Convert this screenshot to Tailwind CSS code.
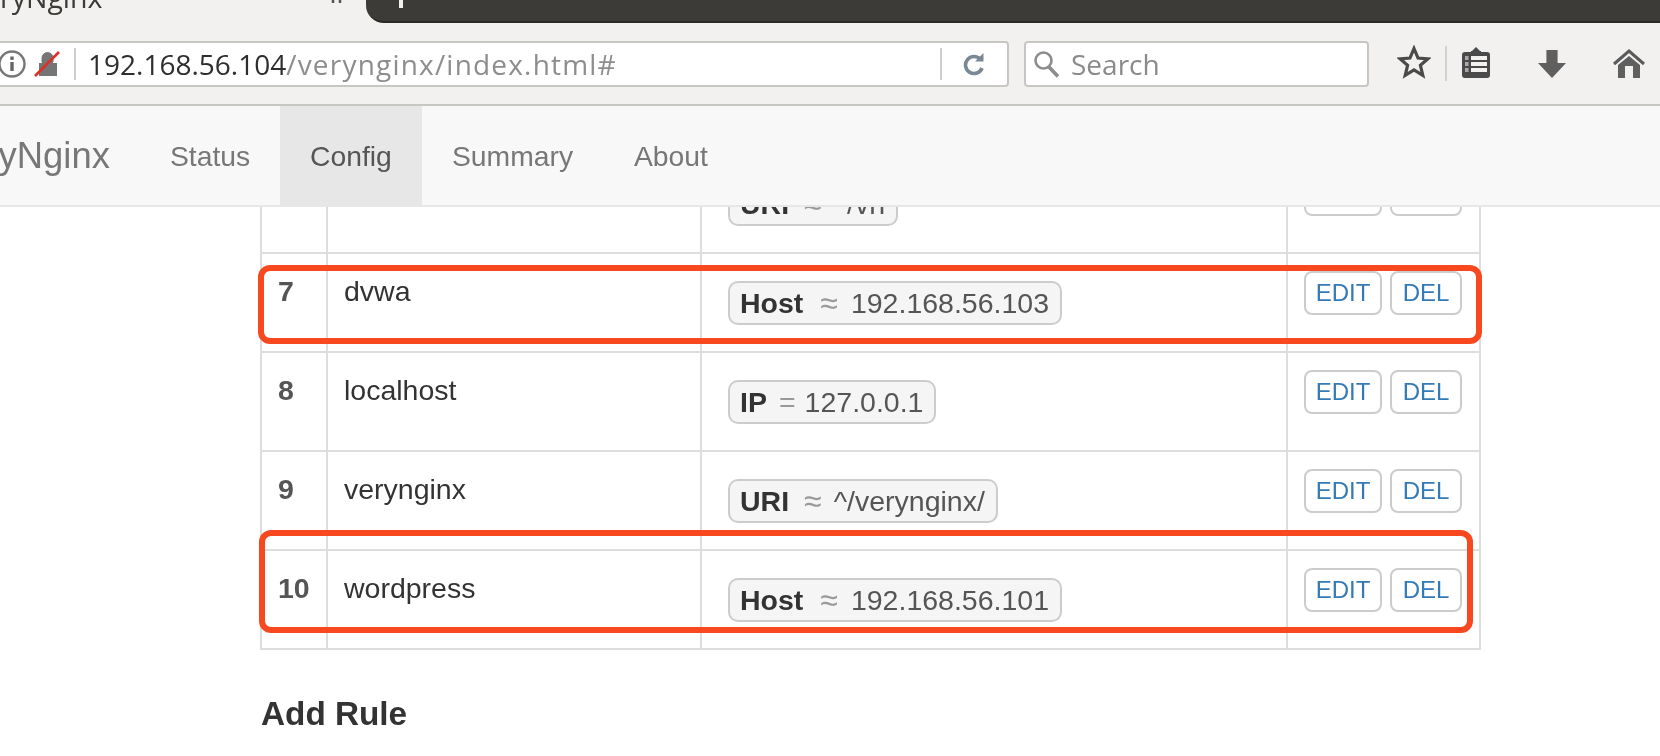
<!DOCTYPE html>
<html>
<head>
<meta charset="utf-8">
<title>VeryNginx</title>
<script src="https://cdn.jsdelivr.net/npm/@tailwindcss/browser@4"></script>
</head>
<body class="bg-white">
<div class="relative w-[1660px] h-[756px] overflow-hidden flex flex-col bg-white font-['Liberation_Sans',Arial,sans-serif] text-[#333] blur-[0.5px]">

  <!-- tab strip -->
  <div class="h-[23px] shrink-0 flex bg-[#f2f1f0] overflow-hidden">
    <div class="w-[337px] shrink-0 h-[30px] -mt-[14px] font-['Open_Sans',sans-serif] text-[28.5px] leading-[23px] text-[#3c3b37] whitespace-nowrap">ryNginx</div>
    <svg class="w-[12px] h-[4px] shrink-0 -ml-[6px]" viewBox="0 0 12 4"><path d="M2 0v3M9 0v3" stroke="#555" stroke-width="2.500" fill="none"/></svg>
    <div class="flex-1 ml-[23px] h-[23px] bg-[#3c3b37] rounded-bl-[18px] border-b-2 border-[#2b2a27] pl-[33px]">
      <div class="w-[4px] h-[8px] bg-[#f2f1f0]"></div>
    </div>
  </div>

  <!-- toolbar -->
  <div class="h-[83px] shrink-0 bg-[#f2f1f0] border-b-2 border-[#c8c6c2] flex items-start pt-[18px] font-['Open_Sans',sans-serif]">
    <div class="w-[1013px] -ml-[4px] h-[46px] shrink-0 bg-white border-2 border-[#c8c6c2] rounded-[4px] flex items-center">
      <svg class="-ml-[1px] shrink-0" width="30" height="30" viewBox="0 0 30 30"><circle cx="15" cy="15" r="12.500" fill="none" stroke="#777" stroke-width="2.400"/><rect x="13.300" y="13" width="3.400" height="9" fill="#666"/><rect x="13.300" y="7.500" width="3.400" height="3.400" fill="#666"/></svg>
      <svg class="ml-[6px] shrink-0" width="28" height="28" viewBox="0 0 28 28"><path d="M6 26V13h3V8a5.500 5.500 0 0 1 11 0v5h4v13z" fill="#757575"/><path d="M9 12V8a5.500 5.500 0 0 1 11 0v4" fill="none" stroke="#757575" stroke-width="1"/><path d="M2 26L26 2" stroke="#d8322a" stroke-width="2.600"/></svg>
      <div class="ml-[13px] w-[2px] h-[32px] bg-[#cfcdc9] shrink-0"></div>
      <div class="ml-[12px] text-[28px] leading-[40px] whitespace-nowrap text-[#2e2e2e] shrink-0">192.168.56.104<span class="text-[#8d8d8d] tracking-[1.2px]">/verynginx/index.html#</span></div>
      <div class="flex-1"></div>
      <div class="w-[2px] h-[32px] bg-[#cfcdc9] shrink-0"></div>
      <svg class="ml-[21px] mr-[22px] shrink-0" width="22" height="24" viewBox="0 0 22 24"><path d="M17.500 7.500A8.500 8.500 0 1 0 19 16" fill="none" stroke="#7a8794" stroke-width="3.600"/><path d="M12 9.500h8.500V1z" fill="#7a8794"/></svg>
    </div>
    <div class="ml-[15px] w-[345px] h-[46px] shrink-0 bg-white border-2 border-[#c8c6c2] rounded-[4px] flex items-center">
      <svg class="ml-[6px] shrink-0" width="28" height="28" viewBox="0 0 28 28"><circle cx="11.500" cy="10.500" r="8" fill="none" stroke="#8c8c8c" stroke-width="2.600"/><path d="M17 17l9 9.500" stroke="#8c8c8c" stroke-width="3.600"/></svg>
      <div class="ml-[11px] text-[28px] leading-[40px] text-[#8a8a8a]">Search</div>
    </div>
    <div class="flex items-start">
      <svg class="ml-[28px] mt-[4px] shrink-0" width="34" height="34" viewBox="0 0 34 34"><path d="M17 3.500l4 9.500 10 .8-7.600 6.600 2.400 10L17 25l-8.800 5.400 2.400-10L3 13.800l10-.8z" fill="none" stroke="#4a4a4a" stroke-width="3.200" stroke-linejoin="miter"/></svg>
      <div class="ml-[14px] mt-[5px] w-[2px] h-[35px] bg-[#d3d1cd] shrink-0"></div>
      <svg class="ml-[15px] mt-[6px] shrink-0" width="28" height="32" viewBox="0 0 28 32"><path d="M9 4h1l4-4 4 4h1v1h6q3 0 3 3v20q0 3-3 3H3q-3 0-3-3V8q0-3 3-3h6z" fill="#4a4a4a"/><path d="M3 9h3.500v4H3zM3 15h3.500v4H3zM3 21h3.500v4H3z" fill="#a9a9a9"/><path d="M9 9h16v4H9zM9 15h16v4H9zM9 21h16v4H9z" fill="#f2f1f0"/></svg>
      <svg class="ml-[48px] mt-[8px] shrink-0" width="28" height="30" viewBox="0 0 30 30"><path d="M9 0h12v14h9L15 30 0 14h9z" fill="#5f5f5f"/></svg>
      <svg class="ml-[47px] mt-[8px] shrink-0" width="32" height="30" viewBox="0 0 32 30"><path d="M1 15L16 2l15 13" fill="none" stroke="#5a5a5a" stroke-width="3"/><path d="M5 16L16 7l11 9v13h-7V17h-8v12H5z" fill="#5f5f5f"/></svg>
    </div>
  </div>

  <!-- navbar -->
  <nav class="relative z-10 h-[101px] shrink-0 bg-[#f8f8f8] border-b-2 border-[#e7e7e7] flex text-[28.3px] leading-[40px] text-[#777]">
    <div class="-ml-[56px] w-[196px] shrink-0 pt-[30px] text-[36.400px] whitespace-nowrap">VeryNginx</div>
    <a class="w-[140px] shrink-0 px-[30px] py-[30px]">Status</a>
    <a class="w-[142px] shrink-0 px-[30px] py-[30px] bg-[#e7e7e7] text-[#555]">Config</a>
    <a class="w-[182px] shrink-0 px-[30px] py-[30px]">Summary</a>
    <a class="shrink-0 px-[30px] py-[30px]">About</a>
  </nav>

  <!-- content -->
  <main class="flex-1 min-h-0 overflow-hidden pl-[260px] text-[28.500px] leading-[40px]">
    <table class="w-[1219px] -mt-[54px] table-fixed border-collapse">
      <colgroup>
        <col class="w-[66px]"><col class="w-[374px]"><col class="w-[586px]"><col class="w-[193px]">
      </colgroup>
      <tbody>
        <tr class="h-[99px]">
          <td class="border-2 border-[#ddd] p-4 align-top font-bold text-[#555]"></td>
          <td class="border-2 border-[#ddd] p-4 align-top"></td>
          <td class="border-2 border-[#ddd] pt-[27px] pl-[26px] align-top">
            <div class="inline-flex items-center h-[44px] border-2 border-[#ccc] rounded-[10px] bg-[#f5f5f5] pl-[10px] pr-[11px]"><b>URI</b><span class="ml-[15px] text-[32px] text-[#999]">≈</span><span class="ml-[12px] text-[#555]">^/vn</span></div>
          </td>
          <td class="border-2 border-[#ddd] pt-[17px] pl-[16px] align-top">
            <div class="flex gap-[8px]">
              <button class="w-[78px] h-[44px] border-2 border-[#ccc] rounded-[8px] bg-white text-[24px] text-[#337ab7]">EDIT</button>
              <button class="w-[72px] h-[44px] border-2 border-[#ccc] rounded-[8px] bg-white text-[24px] text-[#337ab7]">DEL</button>
            </div>
          </td>
        </tr>
        <tr class="h-[99px]">
          <td class="border-2 border-[#ddd] pt-[17px] pl-[16px] align-top font-bold text-[#555]">7</td>
          <td class="border-2 border-[#ddd] pt-[17px] pl-[16px] align-top">dvwa</td>
          <td class="border-2 border-[#ddd] pt-[27px] pl-[26px] align-top">
            <div class="inline-flex items-center h-[44px] border-2 border-[#ccc] rounded-[10px] bg-[#f5f5f5] pl-[10px] pr-[11px]"><b>Host</b><span class="ml-[17px] text-[32px] text-[#999]">≈</span><span class="ml-[13px] text-[#555]">192.168.56.103</span></div>
          </td>
          <td class="border-2 border-[#ddd] pt-[17px] pl-[16px] align-top">
            <div class="flex gap-[8px]">
              <button class="w-[78px] h-[44px] border-2 border-[#ccc] rounded-[8px] bg-white text-[24px] text-[#337ab7]">EDIT</button>
              <button class="w-[72px] h-[44px] border-2 border-[#ccc] rounded-[8px] bg-white text-[24px] text-[#337ab7]">DEL</button>
            </div>
          </td>
        </tr>
        <tr class="h-[99px]">
          <td class="border-2 border-[#ddd] pt-[17px] pl-[16px] align-top font-bold text-[#555]">8</td>
          <td class="border-2 border-[#ddd] pt-[17px] pl-[16px] align-top">localhost</td>
          <td class="border-2 border-[#ddd] pt-[27px] pl-[26px] align-top">
            <div class="inline-flex items-center h-[44px] border-2 border-[#ccc] rounded-[10px] bg-[#f5f5f5] pl-[10px] pr-[11px]"><b>IP</b><span class="ml-[12px] text-[#999]">=</span><span class="ml-[9px] text-[#555]">127.0.0.1</span></div>
          </td>
          <td class="border-2 border-[#ddd] pt-[17px] pl-[16px] align-top">
            <div class="flex gap-[8px]">
              <button class="w-[78px] h-[44px] border-2 border-[#ccc] rounded-[8px] bg-white text-[24px] text-[#337ab7]">EDIT</button>
              <button class="w-[72px] h-[44px] border-2 border-[#ccc] rounded-[8px] bg-white text-[24px] text-[#337ab7]">DEL</button>
            </div>
          </td>
        </tr>
        <tr class="h-[99px]">
          <td class="border-2 border-[#ddd] pt-[17px] pl-[16px] align-top font-bold text-[#555]">9</td>
          <td class="border-2 border-[#ddd] pt-[17px] pl-[16px] align-top">verynginx</td>
          <td class="border-2 border-[#ddd] pt-[27px] pl-[26px] align-top">
            <div class="inline-flex items-center h-[44px] border-2 border-[#ccc] rounded-[10px] bg-[#f5f5f5] pl-[10px] pr-[11px]"><b>URI</b><span class="ml-[15px] text-[32px] text-[#999]">≈</span><span class="ml-[12px] text-[#555]">^/verynginx/</span></div>
          </td>
          <td class="border-2 border-[#ddd] pt-[17px] pl-[16px] align-top">
            <div class="flex gap-[8px]">
              <button class="w-[78px] h-[44px] border-2 border-[#ccc] rounded-[8px] bg-white text-[24px] text-[#337ab7]">EDIT</button>
              <button class="w-[72px] h-[44px] border-2 border-[#ccc] rounded-[8px] bg-white text-[24px] text-[#337ab7]">DEL</button>
            </div>
          </td>
        </tr>
        <tr class="h-[99px]">
          <td class="border-2 border-[#ddd] pt-[17px] pl-[16px] align-top font-bold text-[#555]">10</td>
          <td class="border-2 border-[#ddd] pt-[17px] pl-[16px] align-top">wordpress</td>
          <td class="border-2 border-[#ddd] pt-[27px] pl-[26px] align-top">
            <div class="inline-flex items-center h-[44px] border-2 border-[#ccc] rounded-[10px] bg-[#f5f5f5] pl-[10px] pr-[11px]"><b>Host</b><span class="ml-[17px] text-[32px] text-[#999]">≈</span><span class="ml-[13px] text-[#555]">192.168.56.101</span></div>
          </td>
          <td class="border-2 border-[#ddd] pt-[17px] pl-[16px] align-top">
            <div class="flex gap-[8px]">
              <button class="w-[78px] h-[44px] border-2 border-[#ccc] rounded-[8px] bg-white text-[24px] text-[#337ab7]">EDIT</button>
              <button class="w-[72px] h-[44px] border-2 border-[#ccc] rounded-[8px] bg-white text-[24px] text-[#337ab7]">DEL</button>
            </div>
          </td>
        </tr>
      </tbody>
    </table>
    <h2 class="mt-[46px] ml-[1px] text-[33.300px] leading-[36px] font-bold">Add Rule</h2>
  </main>

  <!-- red annotation boxes -->
  <div class="absolute z-20 left-[258px] top-[265px] w-[1224px] h-[79px] border-[6px] border-[#f8481f] rounded-[12px]"></div>
  <div class="absolute z-20 left-[259px] top-[530px] w-[1214px] h-[103px] border-[6px] border-[#f8481f] rounded-[12px]"></div>
</div>
</body>
</html>
